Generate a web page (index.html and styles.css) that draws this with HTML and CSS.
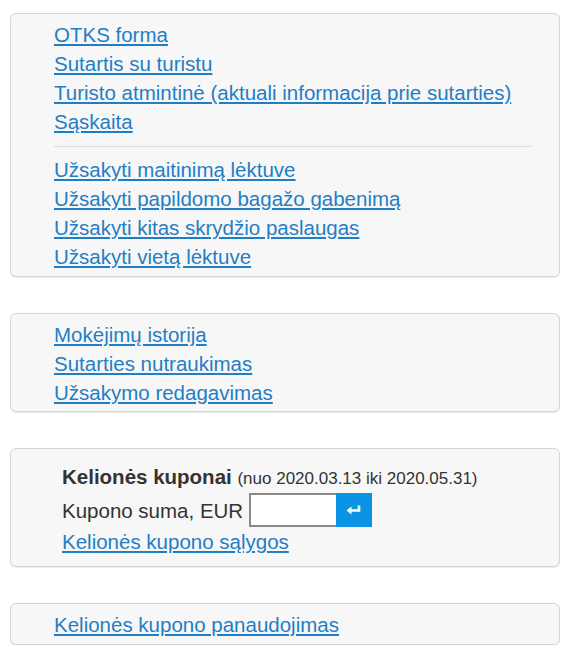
FILE: index.html
```html
<!DOCTYPE html>
<html lang="lt">
<head>
<meta charset="utf-8">
<link rel="stylesheet" href="styles.css">
</head>
<body>
<div class="page">
  <div class="panel">
    <ul class="links">
      <li><a href="#">OTKS forma</a></li>
      <li><a href="#">Sutartis su turistu</a></li>
      <li><a href="#">Turisto atmintinė (aktuali informacija prie sutarties)</a></li>
      <li><a href="#">Sąskaita</a></li>
    </ul>
    <hr class="sep">
    <ul class="links">
      <li><a href="#">Užsakyti maitinimą lėktuve</a></li>
      <li><a href="#">Užsakyti papildomo bagažo gabenimą</a></li>
      <li><a href="#">Užsakyti kitas skrydžio paslaugas</a></li>
      <li><a href="#">Užsakyti vietą lėktuve</a></li>
    </ul>
  </div>

  <div class="panel panel-tight">
    <ul class="links">
      <li><a href="#">Mokėjimų istorija</a></li>
      <li><a href="#">Sutarties nutraukimas</a></li>
      <li><a href="#">Užsakymo redagavimas</a></li>
    </ul>
  </div>

  <div class="panel coupon">
    <div class="coupon-title"><b>Kelionės kuponai</b> <span class="period">(nuo 2020.03.13 iki 2020.05.31)</span></div>
    <div class="coupon-row">
      <label class="coupon-label">Kupono suma, EUR</label>
      <input class="coupon-input" type="text">
      <button class="coupon-btn" type="button">
        <svg width="16" height="10" viewBox="0 0 16 10"><path d="M13 0.5 V5.5 H4.5" fill="none" stroke="#fff" stroke-width="2.6"/><path d="M0.5 5.5 L5.5 1.5 V9.5 Z" fill="#fff"/></svg>
      </button>
    </div>
    <a class="coupon-link" href="#">Kelionės kupono sąlygos</a>
  </div>

  <div class="panel">
    <ul class="links">
      <li><a href="#">Kelionės kupono panaudojimas</a></li>
    </ul>
  </div>
</div>
</body>
</html>
```

FILE: styles.css
```css
html, body {
  margin: 0;
  padding: 0;
  background: #ffffff;
}

body {
  font-family: "Liberation Sans", Arial, sans-serif;
  font-size: 20.5px;
  color: #333333;
}

.page {
  display: flex;
  flex-direction: column;
  gap: 36px;
  padding: 13px 17px 0 10px;
}

.panel {
  background: #f7f7f7;
  border: 1px solid #d5d5d5;
  border-radius: 6px;
  box-shadow: 0 1px 1px rgba(0, 0, 0, 0.08);
  padding: 6px 28px 5px 43px;
}

.panel-tight {
  padding-bottom: 4px;
}

.links {
  list-style: none;
  margin: 0;
  padding: 0;
}

.links li {
  line-height: 29px;
}

a {
  color: #1f7ec6;
  text-decoration: underline;
}

.sep {
  border: 0;
  border-top: 1px solid #dddddd;
  margin: 10px 0 8px 0;
  height: 0;
}

.coupon {
  padding: 13px 28px 10px 51px;
}

.coupon-title {
  line-height: 29px;
  white-space: nowrap;
}

.coupon-title b {
  font-weight: bold;
}

.period {
  font-size: 17px;
}

.coupon-row {
  display: flex;
  align-items: center;
  height: 34px;
}

.coupon-label {
  line-height: 29px;
  margin-right: 6px;
}

.coupon-input {
  box-sizing: border-box;
  width: 87px;
  height: 34px;
  margin: 0;
  border: 2px solid #8a8a8a;
  border-right: 0;
  background: #ffffff;
  padding: 0 4px;
}

.coupon-btn {
  box-sizing: border-box;
  width: 36px;
  height: 34px;
  margin: 0;
  border: 0;
  padding: 0;
  background: #0b94e4;
  display: flex;
  align-items: center;
  justify-content: center;
}

.coupon-link {
  display: block;
  line-height: 29px;
}
```
